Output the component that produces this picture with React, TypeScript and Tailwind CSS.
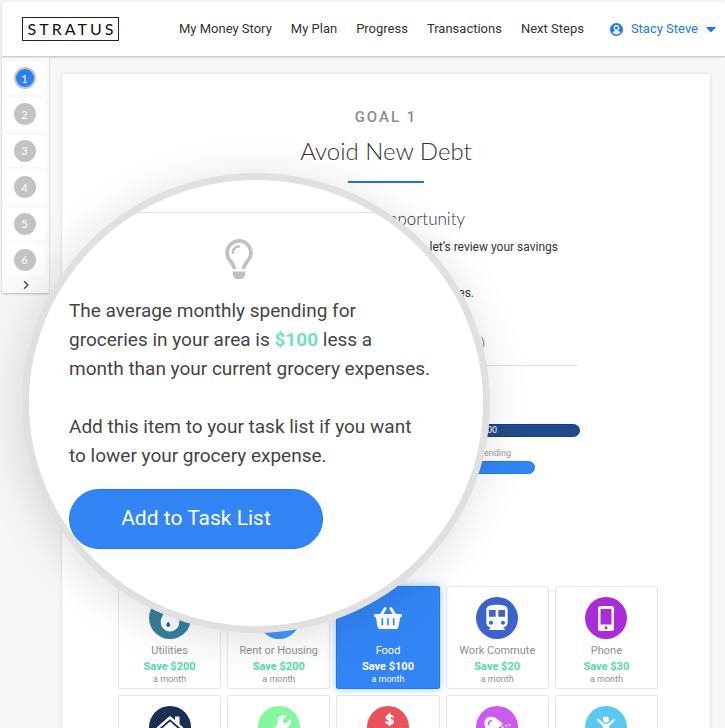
import React from "react";
import { FaRegLightbulb, FaWrench, FaCaretDown } from "react-icons/fa";
import { MdDirectionsTransit } from "react-icons/md";

const navLinks = ["My Money Story", "My Plan", "Progress", "Transactions", "Next Steps"];

function UserIcon() {
  return (
    <svg viewBox="0 0 16 16" className="mr-2 size-[13px]" aria-hidden="true">
      <circle cx="8" cy="8" r="8" fill="#1a78f5" />
      <path d="M3 11.500c1-1.300 2.600-1.600 5-1.600s4 .3 5 1.600c-1.200 1.700-3 2.500-5 2.500s-3.800-.8-5-2.500z" fill="white" />
      <circle cx="8" cy="6" r="2.700" fill="#1a78f5" stroke="white" strokeWidth="1.600" />
    </svg>
  );
}

function DropIcon() {
  return (
    <svg viewBox="0 0 24 24" className="size-7" aria-hidden="true">
      <path d="M12 1C9 6 4 10 4 15.500a8 8 0 0 0 16 0C20 10 15 6 12 1z" fill="white" />
      <path d="M10.500 15c-.8 1.200-1.700 2-1.700 3.100a1.700 1.700 0 0 0 3.400 0c0-1.100-.9-1.900-1.700-3.100z" fill="#1d6f8c" />
    </svg>
  );
}

function KeyIcon() {
  return (
    <svg viewBox="0 0 24 24" className="size-5" aria-hidden="true">
      <path d="M4 14V5h16v9z" fill="white" />
    </svg>
  );
}

function BasketIcon() {
  return (
    <svg viewBox="0 0 28 24" className="h-6 w-7" aria-hidden="true">
      <path
        fillRule="evenodd"
        fill="white"
        d="M1.200 8h25.600a1 1 0 0 1 1 1v1.300a1 1 0 0 1-1 1h-.6l-1.700 9.500A2.600 2.600 0 0 1 21.900 23H6.100a2.600 2.600 0 0 1-2.600-2.200L1.800 11.300h-.6a1 1 0 0 1-1-1V9a1 1 0 0 1 1-1zM7.500 12.800v6a.8.8 0 0 0 1.600 0v-6a.8.8 0 0 0-1.600 0zm5.700 0v6a.8.8 0 0 0 1.600 0v-6a.8.8 0 0 0-1.600 0zm5.700 0v6a.8.8 0 0 0 1.600 0v-6a.8.8 0 0 0-1.600 0z"
      />
      <path d="M7 9l4.200-6.500M21 9l-4.200-6.500" stroke="white" strokeWidth="2.800" strokeLinecap="round" />
    </svg>
  );
}

function PhoneIcon() {
  return (
    <svg viewBox="0 0 16 25" className="h-[25px] w-4" aria-hidden="true">
      <path
        fillRule="evenodd"
        fill="white"
        d="M2.500 0h11A2.500 2.500 0 0 1 16 2.500v20a2.500 2.500 0 0 1-2.500 2.500h-11A2.500 2.500 0 0 1 0 22.500v-20A2.500 2.500 0 0 1 2.500 0zM2.500 3v15.500h11V3zM8 20.200a1.500 1.500 0 1 0 0 3 1.500 1.500 0 0 0 0-3z"
      />
    </svg>
  );
}

function HouseIcon() {
  return (
    <svg viewBox="0 0 28 24" className="h-6 w-7" fill="none" aria-hidden="true">
      <path d="M2 13L14 2.500 26 13" stroke="white" strokeWidth="2.400" strokeLinecap="round" strokeLinejoin="round" />
      <path d="M19 1.500h4.500v8L19 5.500z" fill="white" />
      <path d="M14 6.500l9 8V23H5v-8.500z" fill="white" />
    </svg>
  );
}

function HandDollarIcon() {
  return (
    <svg viewBox="0 0 30 34" className="h-8 w-7" fill="none" aria-hidden="true">
      <path
        d="M20 6c-.8-.9-1.900-1.300-3.300-1.300-1.800 0-3.100.7-3.100 2.100 0 3 6.500 1.300 6.500 4.300 0 1.400-1.400 2.200-3.300 2.200-1.600 0-2.900-.5-3.700-1.400M16.700 3v12"
        stroke="white"
        strokeWidth="2.400"
        strokeLinecap="round"
      />
      <path d="M6 19h10a2 2 0 0 1 0 4h5l6-5c2-1 3 1 2 2l-7 8H2v-6z" fill="white" />
    </svg>
  );
}

function DryerIcon() {
  return (
    <svg viewBox="0 0 28 24" className="h-6 w-7" fill="none" aria-hidden="true">
      <path d="M20 8.500L12 2.500C6 .5 1.500 3 1.500 8.500s4 7 8 6.200L17 12z" fill="white" />
      <path d="M5.500 9.500c0-2 1-3.500 3-4" stroke="#cb5af0" strokeWidth="1.600" strokeLinecap="round" />
      <path d="M5 14l2 9h5l-1.500-9z" fill="white" />
      <path d="M19 12h1M22.500 10.500h1M26 10h1M20 15h1M23.500 13.500h1M22 17h1M26 14h1" stroke="white" strokeWidth="1.600" strokeLinecap="round" />
    </svg>
  );
}

function ChildIcon() {
  return (
    <svg viewBox="0 0 24 26" className="h-[22px] w-5" fill="none" aria-hidden="true">
      <circle cx="12" cy="4" r="3.600" fill="white" />
      <path d="M2.500 4.500l6.500 6M21.500 4.500l-6.500 6" stroke="white" strokeWidth="2.800" strokeLinecap="round" />
      <path d="M8 9h8v17h-3v-7h-2v7H8z" fill="white" />
    </svg>
  );
}

type Category = {
  name: string;
  amount?: string;
  color: string;
  icon: React.ReactNode;
  active?: boolean;
};

const categories: Category[] = [
  { name: "Utilities", amount: "$200", color: "bg-[#38819c]", icon: <DropIcon /> },
  { name: "Rent or Housing", amount: "$200", color: "bg-[#3f9bf0]", icon: <KeyIcon /> },
  { name: "Food", amount: "$100", color: "bg-transparent", icon: <BasketIcon />, active: true },
  { name: "Work Commute", amount: "$20", color: "bg-[#3c63cc]", icon: <MdDirectionsTransit className="size-8 text-white" /> },
  { name: "Phone", amount: "$30", color: "bg-[#a92cd6]", icon: <PhoneIcon /> },
  { name: "", color: "bg-[#192f55]", icon: <HouseIcon /> },
  { name: "", color: "bg-[#84f8a0]", icon: <FaWrench className="size-6 text-white" /> },
  { name: "", color: "bg-[#ec525b]", icon: <HandDollarIcon /> },
  { name: "", color: "bg-[#cb5af0]", icon: <DryerIcon /> },
  { name: "", color: "bg-[#5bc8f2]", icon: <ChildIcon /> },
];

function CategoryTile({ name, amount, color, icon, active }: Category) {
  return (
    <button
      type="button"
      className={`flex h-[103px] flex-col items-center rounded-xs border pt-2.5 ${
        active
          ? "border-[#2379ee] bg-[#3385f6] text-white shadow-[0_0_10px_rgba(51,150,255,0.5)]"
          : "border-[#e6e6ea] bg-white text-[#8f8f8f]"
      }`}
    >
      <span className={`flex size-[42px] shrink-0 items-center justify-center rounded-full ${color}`}>{icon}</span>
      <span className="mt-1 text-[11px] leading-4 whitespace-nowrap">{name}</span>
      {amount && (
        <>
          <span className={`text-[11px] leading-4 font-bold ${active ? "" : "text-[#55d8ac]"}`}>Save {amount}</span>
          <span className="text-[9px] leading-[9px]">a month</span>
        </>
      )}
    </button>
  );
}

export default function App() {
  return (
    <div className="relative h-screen overflow-hidden bg-[#f6f6f6] pt-0.5 pl-0.5 font-['Roboto',sans-serif] text-[#333]">
      <header className="relative flex h-[54px] items-center bg-white pr-2.5 pl-5 text-[13px] shadow-[0_1px_2px_rgba(0,0,0,0.25)]">
        <a
          href="#home"
          className="flex h-6 w-[97px] shrink-0 items-center justify-center border border-[#222] pl-[3px] font-['Lato',sans-serif] text-[16px] tracking-[3px] text-[#111]"
        >
          STRATUS
        </a>
        <nav className="ml-[60px] flex gap-[19px] whitespace-nowrap">
          {navLinks.map((link) => (
            <a key={link} href="#nav">
              {link}
            </a>
          ))}
        </nav>
        <button type="button" className="ml-auto flex items-center whitespace-nowrap text-[#1a78f5]">
          <UserIcon />
          Stacy Steve
          <FaCaretDown className="-mr-1 ml-[5px] size-4" />
        </button>
      </header>

      <div className="flex items-start">
        <aside className="w-[47px] shrink-0 bg-[#fafafa] pt-1.5 shadow-[0_1px_2px_rgba(0,0,0,0.25)]">
          <ol className="mx-1 flex h-[214px] flex-col justify-between">
            {[1, 2, 3, 4, 5, 6].map((n) => (
              <li key={n} className="flex h-8 items-center justify-center bg-white pr-0.5">
                <button
                  type="button"
                  className={`size-[22px] rounded-full border-2 border-[#c3c3c3] font-['Lato',sans-serif] text-[11px] leading-none text-white ${
                    n === 1 ? "bg-[#2b80f7]" : "bg-[#c3c3c3]"
                  }`}
                >
                  {n}
                </button>
              </li>
            ))}
          </ol>
          <button type="button" aria-label="More goals" className="flex h-[17px] w-full items-center justify-center">
            <svg viewBox="0 0 8 8" className="size-2.5" fill="none" aria-hidden="true">
              <path d="M2.500 1l3 3-3 3" stroke="#444" strokeWidth="1" />
            </svg>
          </button>
        </aside>

        <main className="mt-[18px] mr-[15px] ml-[13px] h-[900px] flex-1 bg-white shadow-[0_0_3px_rgba(0,0,0,0.15)]">
          <div className="flex flex-col items-center pt-[33px]">
            <p className="text-[15px] leading-5 font-medium tracking-[2px] text-[#8c8c8c]">GOAL 1</p>
            <h1 className="mt-2 font-['Lato',sans-serif] text-[24px] leading-8 font-light">Avoid New Debt</h1>
            <hr className="mt-[14px] h-0.5 w-[76px] border-0 bg-[#1a73f5]" />
          </div>
          <section className="mx-auto mt-6 w-[382px] text-right">
            <h2 className="pr-28 font-['Lato',sans-serif] text-[17px] leading-6 font-light">Savings Opportunity</h2>
            <p className="mt-1.5 pr-[19px] text-[12px] leading-5">To build your plan, let’s review your savings</p>
            <p className="mt-[26px] pr-[103px] text-[12px] leading-5">categories.</p>
            <p className="mt-[30px] border-b border-[#e2e2e2] pr-[92px] pb-3 text-[12px] leading-5 text-[#777]">(monthly)</p>
          </section>
          <section className="mx-auto mt-[58px] w-[388px] text-[9px]">
            <div className="h-[13px] rounded-full border border-[#123f85] bg-[#214b8b] pr-[82px] text-right leading-[11px] text-white">$500</div>
            <p className="mt-[9px] pr-[69px] text-right leading-[14px] text-[#999]">Average spending</p>
            <div className="mt-px mr-[45px] h-[13px] rounded-full border border-[#1f78f0] bg-[#3385f6]" />
          </section>
          <div className="mt-28 mr-[52px] ml-14 grid grid-cols-5 gap-1.5">
            {categories.map((category, i) => (
              <CategoryTile key={i} {...category} />
            ))}
          </div>
        </main>
      </div>

      <section className="absolute top-[173px] left-[22px] h-[460px] w-[468px] overflow-hidden rounded-[50%] border-[7px] border-[#e0e0e0] bg-white shadow-[-3px_6px_46px_rgba(0,0,0,0.13)]">
        <div className="mt-8 border-t border-[#e2e2e6] px-10 pt-[26px]">
          <FaRegLightbulb className="ml-[156px] h-10 w-7 text-[#c1c1c1]" />
          <div className="mt-[17px] text-[19px] leading-[29px] whitespace-nowrap text-[#444]">
            <p>
              The average monthly spending for
              <br />
              groceries in your area is <strong className="font-bold text-[#74e0bd]">$100</strong> less a
              <br />
              month than your current grocery expenses.
            </p>
            <p className="mt-[29px]">
              Add this item to your task list if you want
              <br />
              to lower your grocery expense.
            </p>
          </div>
          <button type="button" className="mt-[19px] h-[60px] w-[254px] rounded-full border border-[#2379ee] bg-[#3385f6] text-[21px] text-white">
            Add to Task List
          </button>
        </div>
      </section>
    </div>
  );
}
